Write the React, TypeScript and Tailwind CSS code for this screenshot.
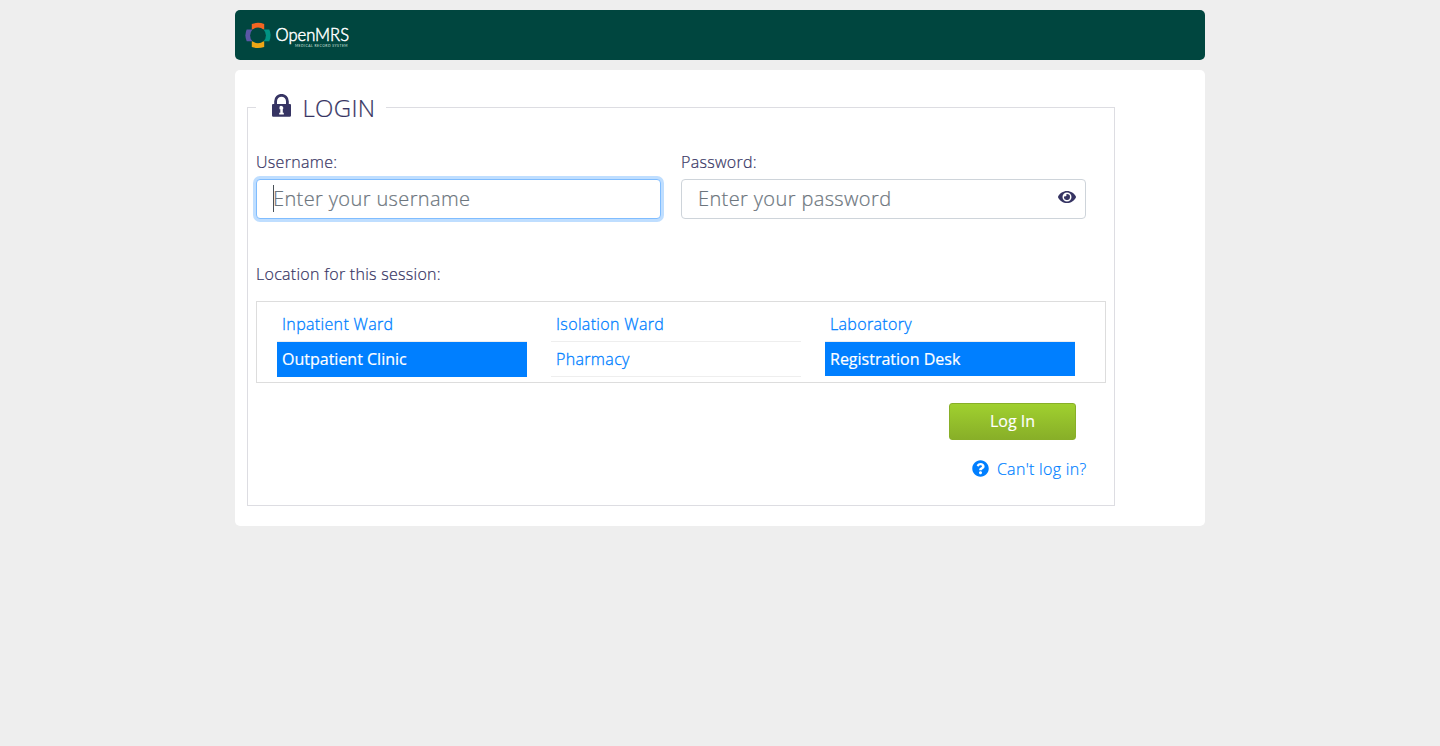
import { FaEye, FaQuestionCircle } from "react-icons/fa";

function Logo() {
  return (
    <svg width="106" height="30" viewBox="0 0 106 30" aria-label="OpenMRS Medical Record System">
      <path d="M6.8 4Q13 1.6 19.2 4V9.6H6.8Z" fill="#f26522" />
      <path d="M6.8 27Q13 29.2 19.2 27V21.2H6.8Z" fill="#eea616" />
      <path d="M1.7 9.6Q-0.9 15.4 1.7 21.2H7.6V9.6Z" fill="#5b57a6" />
      <path d="M24.3 9.6Q26.9 15.4 24.3 21.2H18.4V9.6Z" fill="#009384" />
      <circle cx="13" cy="15.4" r="7.9" fill="#00463f" />
      <text x="30.5" y="21.4" fontFamily="Lato, sans-serif" fontSize="17" fontWeight="300" fill="#fff" stroke="#fff" strokeWidth="0.5" textLength="73.5" lengthAdjust="spacingAndGlyphs">OpenMRS</text>
      <text x="50" y="27.3" fontFamily="Lato, sans-serif" fontSize="3.4" fontWeight="400" fill="#d5e2df" textLength="52.5">MEDICAL RECORD SYSTEM</text>
    </svg>
  );
}

function LockIcon() {
  return (
    <svg className="mr-3 mb-1 h-[23px] w-[19px]" viewBox="0 0 19 23" fill="#363463">
      <path fillRule="evenodd" d="M2.2 10V7.2a7.3 7.3 0 0 1 14.6 0V10H18a1 1 0 0 1 1 1V21.5a1.3 1.3 0 0 1-1.3 1.3H1.3A1.3 1.3 0 0 1 0 21.5V11a1 1 0 0 1 1-1ZM5 10h9V7.2a4.5 4.5 0 0 0-9 0ZM7.5 12.8v2.4h.8v3.5H7.2V20.4h4.6v-1.7H10.8V15.2a1.9 1.9 0 1 0-3.3-2.4Z" />
    </svg>
  );
}

function Field({ label, placeholder, focused = false }: { label: string; placeholder: string; focused?: boolean }) {
  return (
    <div className="w-[405px]">
      <div className="mb-[5px] h-6 text-base leading-6">{label}</div>
      <div
        className={
          focused
            ? "flex h-10 items-center rounded border border-[#80bdff] bg-white px-4 text-xl tracking-[0.38px] text-[#6c757d] shadow-[0_0_0_3px_#bfdeff]"
            : "flex h-10 items-center justify-between rounded border border-[#ced4da] bg-white pr-[9px] pl-4 text-xl tracking-[0.38px] text-[#6c757d]"
        }
      >
        {focused && <span className="-mr-px mb-0.5 h-[27px] w-px bg-[#495057]" />}
        <span>{placeholder}</span>
        {!focused && <FaEye className="mb-1 h-[18px] w-[18px] text-[#363463]" strokeWidth="0" />}
      </div>
    </div>
  );
}

const columns = [
  [{ name: "Inpatient Ward" }, { name: "Outpatient Clinic", selected: true }],
  [{ name: "Isolation Ward" }, { name: "Pharmacy" }],
  [{ name: "Laboratory" }, { name: "Registration Desk", selected: true, short: true }],
];

export default function App() {
  return (
    <div className="min-h-screen bg-[#eeeeee] pt-2.5 font-['Open_Sans',sans-serif] font-light tracking-[0.3px] text-[#363463] [-webkit-text-stroke:0.2px_currentColor]">
      <div className="mx-auto w-[970px]">
        <header className="flex h-[50px] items-center rounded-[5px] bg-[#00463f] pl-2.5 tracking-normal [-webkit-text-stroke:0]">
          <Logo />
        </header>
        <main className="mt-2.5 h-[456px] rounded-[5px] bg-white pt-5 pl-3">
          <fieldset className="h-[416px] w-[868px] border border-[#dddde2] px-2">
            <legend className="flex h-[35px] w-[130px] items-center pl-[15.5px] text-2xl">
              <LockIcon />
              <span>LOGIN</span>
            </legend>
            <div className="mt-[25px] flex gap-5">
              <Field label="Username:" placeholder="Enter your username" focused />
              <Field label="Password:" placeholder="Enter your password" />
            </div>
            <div className="mt-[43px] text-base leading-6 tracking-[0.28px]">Location for this session:</div>
            <div className="mt-[15px] flex h-[82px] w-[850px] gap-6 border border-[#dddddd] pt-[5px] pl-5">
              {columns.map((items, i) => (
                <ul key={i} className="w-[250px]">
                  {items.map((item) => (
                    <li
                      key={item.name}
                      className={
                        item.selected
                          ? item.short
                            ? "h-[34px] bg-[#007fff] px-[5px] font-normal leading-[34px] tracking-normal text-white [-webkit-text-stroke:0.2px_white]"
                            : "h-[35px] bg-[#007fff] px-[5px] font-normal leading-[34px] tracking-normal text-white [-webkit-text-stroke:0.2px_white]"
                          : "h-[35px] border-b border-[#eeeeee] px-[5px] leading-[34px] tracking-[0.34px] text-[#007fff] [-webkit-text-stroke:0.3px_#007fff]"
                      }
                    >
                      {item.name}
                    </li>
                  ))}
                </ul>
              ))}
            </div>
            <div className="mt-5 flex w-[820px] justify-end">
              <button className="h-[37px] w-[127px] rounded-[3px] border border-[#88af28] bg-linear-to-b from-[#a0d02f] to-[#88af28] pb-0.5 text-base font-normal tracking-normal text-white [-webkit-text-stroke:0.15px_white]">
                Log In
              </button>
            </div>
            <div className="mt-[17px] flex w-[830.5px] items-center justify-end gap-2 text-base leading-6 text-[#007fff] [-webkit-text-stroke:0.2px_#007fff]">
              <FaQuestionCircle className="mb-0.5 h-[17px] w-[17px]" />
              <span>Can't log in?</span>
            </div>
          </fieldset>
        </main>
      </div>
    </div>
  );
}
